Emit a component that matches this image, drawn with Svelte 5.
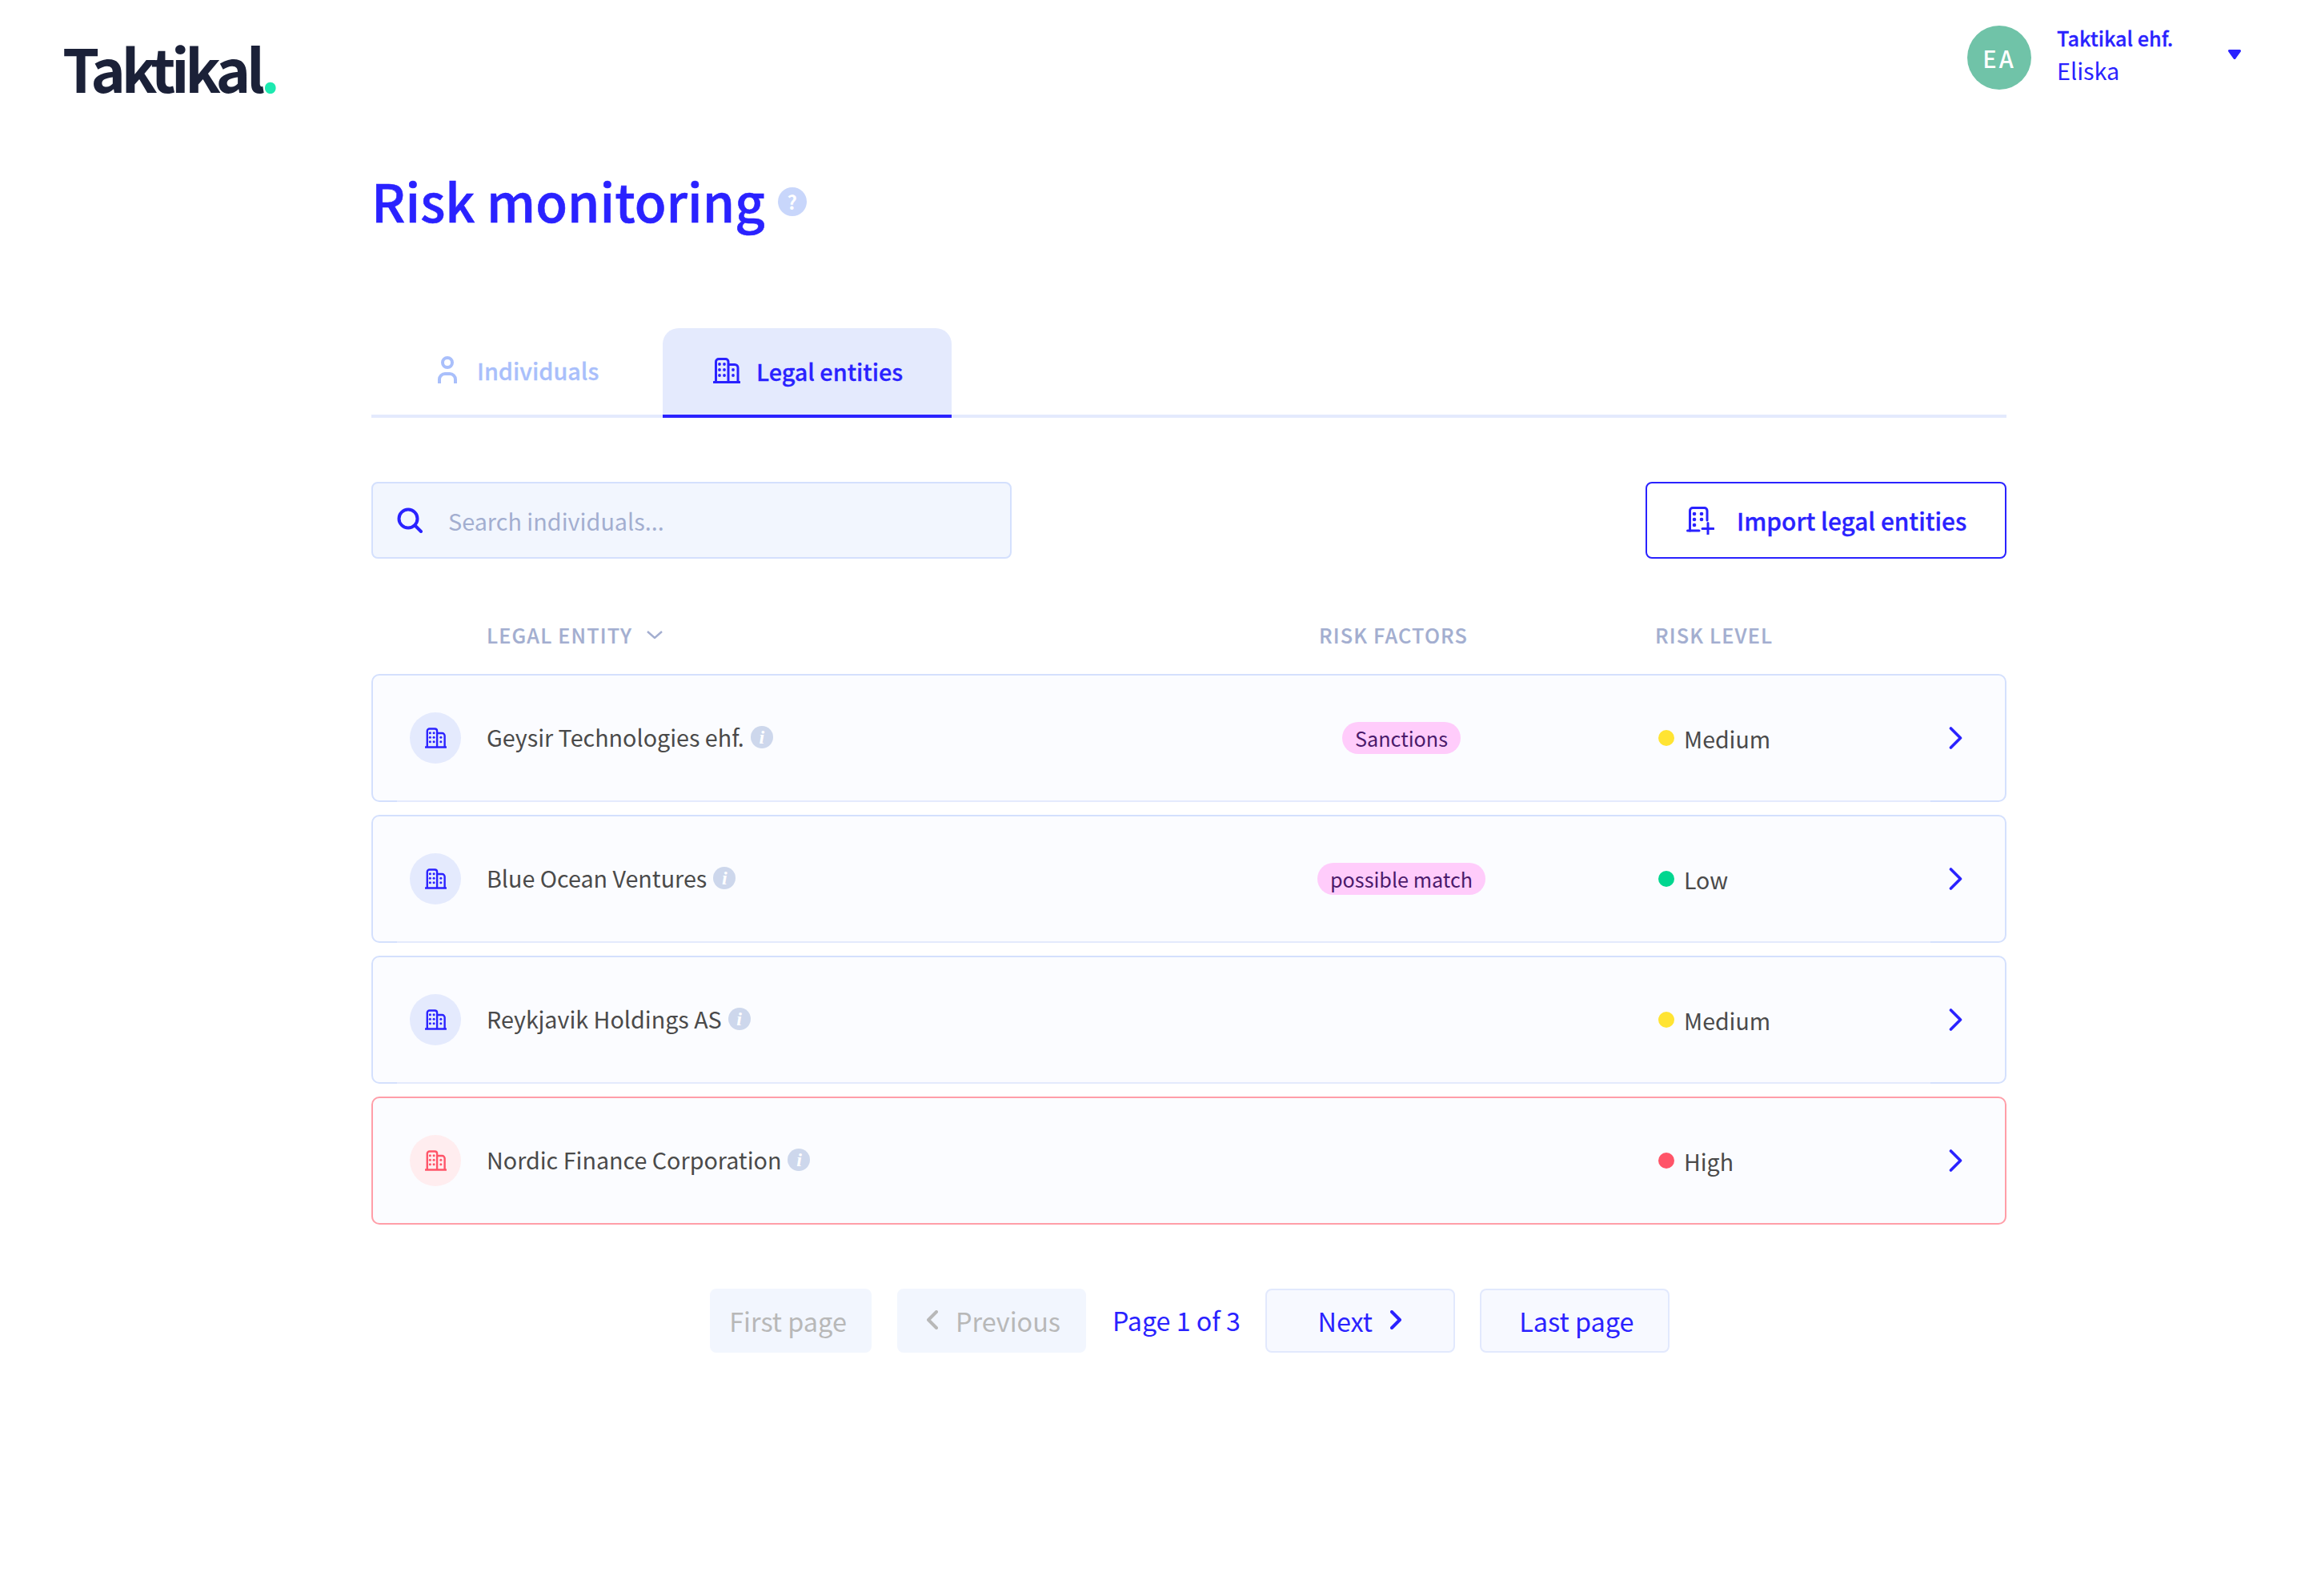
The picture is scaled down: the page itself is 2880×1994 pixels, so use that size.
<script>
  const rows = [
    { name: "Geysir Technologies ehf.", factor: "Sanctions", level: "Medium" },
    { name: "Blue Ocean Ventures", factor: "possible match", level: "Low" },
    { name: "Reykjavik Holdings AS", factor: "", level: "Medium" },
    { name: "Nordic Finance Corporation", factor: "", level: "High" },
  ];
</script>

{#snippet building()}
  <svg class="building" viewBox="0 0 34 32" fill="none" stroke="currentColor" stroke-width="3">
    <path d="M1 30.5h32" stroke-linecap="round" />
    <path d="M3.5 30V5A3.5 3.5 0 0 1 7 1.5h8.5A3.5 3.5 0 0 1 19 5v25" />
    <path d="M19 8.5h8a4 4 0 0 1 4 4V30" />
    <g fill="currentColor" stroke="none">
      <circle cx="8" cy="8" r="1.9" /><circle cx="14" cy="8" r="1.9" />
      <circle cx="8" cy="15" r="1.9" /><circle cx="14" cy="15" r="1.9" />
      <circle cx="8" cy="22" r="1.9" /><circle cx="14" cy="22" r="1.9" />
      <circle cx="25" cy="15" r="1.9" /><circle cx="25" cy="22" r="1.9" />
    </g>
  </svg>
{/snippet}

<div class="page">
  <header class="topbar">
    <div class="logo">Taktikal<span>.</span></div>
    <div class="account">
      <div class="avatar">EA</div>
      <div class="who">
        <strong>Taktikal ehf.</strong>
        <span>Eliska</span>
      </div>
      <svg class="caret" viewBox="0 0 16 12"><path d="M1.5 1.5h13L8 10.5z" fill="currentColor" stroke="currentColor" stroke-width="3" stroke-linejoin="round" /></svg>
    </div>
  </header>

  <main class="content">
    <h1>Risk monitoring <span class="help">?</span></h1>

    <nav class="tabs">
      <div class="tab">
        <svg class="person" viewBox="0 0 24 34" fill="none" stroke="currentColor" stroke-width="4">
          <circle cx="12" cy="8" r="6" />
          <path d="M2 34v-5a7 7 0 0 1 7-7h6a7 7 0 0 1 7 7v5" />
        </svg>
        Individuals
      </div>
      <div class="tab active">
        {@render building()}
        Legal entities
      </div>
    </nav>

    <div class="toolbar">
      <label class="search">
        <svg viewBox="0 0 32 32" fill="none" stroke="currentColor" stroke-width="4" stroke-linecap="round">
          <circle cx="14" cy="14" r="11.5" />
          <path d="M22.5 22.5 30 30" />
        </svg>
        <input type="text" placeholder="Search individuals..." />
      </label>
      <button class="import">
        <svg viewBox="0 0 36 36" fill="none" stroke="currentColor" stroke-width="3" stroke-linecap="round">
          <path d="M5.5 31V6A3.5 3.5 0 0 1 9 2.5h14.5A3.5 3.5 0 0 1 27 6v12" />
          <path d="M2.5 31H17" />
          <path d="M28 21.5v14M21 28.5h14" />
          <g fill="currentColor" stroke="none">
            <circle cx="11" cy="10" r="2.3" /><circle cx="20" cy="10" r="2.3" />
            <circle cx="11" cy="17" r="2.3" /><circle cx="20" cy="17" r="2.3" />
            <circle cx="11" cy="24" r="2.3" />
          </g>
        </svg>
        Import legal entities
      </button>
    </div>

    <div class="cols head">
      <span></span>
      <span class="sort">
        LEGAL ENTITY
        <svg viewBox="0 0 20 10" fill="none" stroke="currentColor" stroke-width="2.4"><path d="M1 1l9 8 9-8" /></svg>
      </span>
      <span>RISK FACTORS</span>
      <span>RISK LEVEL</span>
      <span></span>
    </div>

    <div class="list">
      {#each rows as row}
        <div class="cols row" class:high={row.level === "High"}>
          <div class="badge">{@render building()}</div>
          <div class="name">{row.name} <span class="info">i</span></div>
          <div class="factor">
            {#if row.factor}<span class="pill">{row.factor}</span>{/if}
          </div>
          <div class="level">
            <i class="dot {row.level.toLowerCase()}"></i>{row.level}
          </div>
          <svg class="go" viewBox="0 0 17 28" fill="none" stroke="currentColor" stroke-width="3.6" stroke-linecap="round" stroke-linejoin="round"><path d="M2.5 2l12 12-12 12" /></svg>
        </div>
      {/each}
    </div>

    <div class="pager">
      <button class="off">First page</button>
      <button class="off">
        <svg viewBox="0 0 14 24" fill="none" stroke="currentColor" stroke-width="4" stroke-linecap="round" stroke-linejoin="round"><path d="M12 2 2 12l10 10" /></svg>
        Previous
      </button>
      <span class="count">Page 1 of 3</span>
      <button class="next">
        Next
        <svg viewBox="0 0 14 24" fill="none" stroke="currentColor" stroke-width="4" stroke-linecap="round" stroke-linejoin="round"><path d="M2 2l10 10L2 22" /></svg>
      </button>
      <button>Last page</button>
    </div>
  </main>
</div>

<style>
  :global(body) {
    margin: 0;
    background: #fff;
  }

  .page {
    width: 2880px;
    height: 1994px;
    font-family: "Noto Sans CJK JP", "Noto Sans", sans-serif;
    font-size: 28.8px;
    color: #4a4a4a;
  }

  .topbar {
    display: flex;
    justify-content: space-between;
    padding: 32px 80px 0 78px;
    height: 112px;
    box-sizing: border-box;
  }

  .logo {
    font-size: 74px;
    line-height: 112px;
    font-weight: 700;
    letter-spacing: -5.4px;
    color: #1b2138;
    margin-top: -4px;
  }

  .logo span {
    color: #1de9b0;
  }

  .account {
    display: flex;
    align-items: flex-start;
    color: #2a22ff;
  }

  .avatar {
    width: 80px;
    height: 80px;
    border-radius: 50%;
    background: #70c3a8;
    color: #fff;
    font-size: 29px;
    font-weight: 500;
    letter-spacing: 3px;
    display: flex;
    align-items: center;
    justify-content: center;
  }

  .who {
    display: flex;
    flex-direction: column;
    width: 214px;
    margin-left: 32px;
  }

  .who strong {
    font-size: 25.2px;
    line-height: 34px;
    font-weight: 500;
    margin-top: -2px;
    -webkit-text-stroke: 0.3px currentColor;
  }

  .who span {
    font-size: 28.8px;
    line-height: 40px;
    margin-top: 4px;
  }

  .caret {
    width: 16px;
    height: 12px;
    margin-top: 30px;
  }

  .content {
    width: 2043px;
    margin-left: 464px;
  }

  h1 {
    margin: 94px 0 0;
    font-size: 64.8px;
    line-height: 88px;
    font-weight: 500;
    color: #2a22ff;
    -webkit-text-stroke: 0.6px currentColor;
    display: flex;
    align-items: center;
    gap: 16px;
  }

  .help {
    width: 36px;
    height: 36px;
    margin-top: 3px;
    border-radius: 50%;
    background: #c8d6fb;
    color: #fff;
    font-size: 24px;
    line-height: 36px;
    font-weight: 700;
    text-align: center;
    -webkit-text-stroke: 0;
  }

  .tabs {
    display: flex;
    margin-top: 116px;
    height: 108px;
    border-bottom: 4px solid #e4eafd;
  }

  .tab {
    display: flex;
    align-items: center;
    gap: 25px;
    width: 364px;
    box-sizing: border-box;
    padding: 0 0 4px 83px;
    color: #a9bffb;
    font-weight: 500;
    font-size: 28.8px;
    -webkit-text-stroke: 0.3px currentColor;
  }

  .tab.active {
    box-sizing: content-box;
    width: 298px;
    height: 106px;
    padding: 0 0 2px 63px;
    gap: 20px;
    background: #e4eafd;
    color: #2a22ff;
    border-radius: 20px 20px 0 0;
    border-bottom: 4px solid #2a22ff;
  }

  .person {
    width: 24px;
    height: 34px;
  }

  .building {
    width: 34px;
    height: 32px;
  }

  .toolbar {
    display: flex;
    justify-content: space-between;
    margin-top: 80px;
  }

  .search {
    display: flex;
    align-items: center;
    gap: 32px;
    width: 800px;
    height: 96px;
    box-sizing: border-box;
    padding-left: 30px;
    background: #f2f6fe;
    border: 2px solid #d4e0fd;
    border-radius: 8px;
    color: #2a22ff;
  }

  .search svg {
    width: 32px;
    height: 32px;
  }

  .search input {
    flex: 1;
    border: 0;
    outline: 0;
    padding: 0;
    background: none;
    font: inherit;
    color: #4a4a4a;
  }

  .search input::placeholder {
    color: #a3aed0;
    opacity: 1;
  }

  .import {
    display: flex;
    align-items: center;
    gap: 28px;
    width: 451px;
    height: 96px;
    box-sizing: border-box;
    padding: 0 0 0 48px;
    background: #fff;
    border: 2px solid #2a22ff;
    border-radius: 8px;
    color: #2a22ff;
    font: inherit;
    font-size: 29.8px;
    font-weight: 500;
    -webkit-text-stroke: 0.3px currentColor;
  }

  .import svg {
    width: 36px;
    height: 36px;
  }

  .cols {
    display: grid;
    grid-template-columns: 142px 1040px 420px 1fr 70px;
    align-items: center;
  }

  .head {
    height: 144px;
    padding: 0 2px 33px;
    box-sizing: border-box;
    align-items: end;
    line-height: 32px;
    font-size: 25.2px;
    font-weight: 500;
    letter-spacing: 1.2px;
    color: #a3aed0;
    -webkit-text-stroke: 0.2px currentColor;
  }

  .sort {
    display: flex;
    align-items: center;
    gap: 18px;
  }

  .sort svg {
    width: 20px;
    height: 10px;
  }

  .list {
    display: flex;
    flex-direction: column;
    gap: 16px;
  }

  .row {
    position: relative;
    height: 160px;
    box-sizing: border-box;
    background: #fbfcff;
    border: 2px solid #d4e0fd;
    border-radius: 10px;
  }

  /* the bottom edge is paler between the corners */
  .row::after {
    content: "";
    position: absolute;
    left: 30px;
    right: 93px;
    bottom: -2px;
    height: 2px;
    background: #e4eafd;
  }

  .row.high {
    border-color: #ff9ea8;
  }

  .row.high::after {
    display: none;
  }

  .badge {
    width: 64px;
    height: 64px;
    margin-left: 46px;
    border-radius: 50%;
    background: #e4eafd;
    color: #2a22ff;
    display: flex;
    align-items: center;
    justify-content: center;
  }

  .badge .building {
    width: 27px;
    height: 26px;
  }

  .high .badge {
    background: #ffedef;
    color: #ff5468;
  }

  .name {
    display: flex;
    align-items: center;
    gap: 8px;
    padding-bottom: 3px;
    font-size: 28.7px;
  }

  .info {
    width: 28px;
    height: 28px;
    border-radius: 50%;
    background: #cdd7ec;
    color: #fff;
    font-family: "Liberation Serif", serif;
    font-style: italic;
    font-weight: 700;
    font-size: 24px;
    line-height: 28px;
    text-align: center;
  }

  .factor {
    width: 206px;
    display: flex;
    justify-content: center;
  }

  .pill {
    height: 40px;
    line-height: 40px;
    padding: 0 16px;
    border-radius: 20px;
    background: #ffccfb;
    color: #4b1a6b;
    font-size: 25.2px;
    white-space: nowrap;
  }

  .level {
    display: flex;
    align-items: center;
    gap: 12px;
    padding-left: 4px;
    font-size: 28.5px;
  }

  .dot {
    width: 20px;
    height: 20px;
    border-radius: 50%;
  }

  .dot.medium { background: #ffe433; }
  .dot.low { background: #00d68f; }
  .dot.high { background: #ff5468; }

  .go {
    width: 17px;
    height: 28px;
    color: #2a22ff;
  }

  .pager {
    display: flex;
    align-items: center;
    margin-top: 80px;
    margin-left: 423px;
    gap: 32px;
  }

  .pager button {
    display: flex;
    align-items: center;
    justify-content: center;
    gap: 22px;
    height: 80px;
    padding: 0 0 2px;
    width: 237px;
    box-sizing: border-box;
    background: #f7f9ff;
    border: 2px solid #e2e9fd;
    border-radius: 8px;
    color: #2a22ff;
    font: inherit;
    font-size: 32.4px;
  }

  .pager button.off {
    background: #f2f6fe;
    border-color: #f2f6fe;
    color: #b8b8b8;
  }

  .pager button.off:first-child {
    width: 202px;
    padding-right: 7px;
  }

  .pager button.off:nth-child(2) {
    width: 236px;
    padding-left: 5px;
  }

  .pager button.next {
    padding-right: 1px;
  }

  .pager button:last-child {
    margin-left: -1px;
    padding-left: 5px;
  }

  .pager button svg {
    width: 14px;
    height: 24px;
  }

  .count {
    font-size: 32.2px;
    padding-bottom: 2px;
    margin-left: 1px;
    margin-right: -1px;
    color: #2a22ff;
  }
</style>
